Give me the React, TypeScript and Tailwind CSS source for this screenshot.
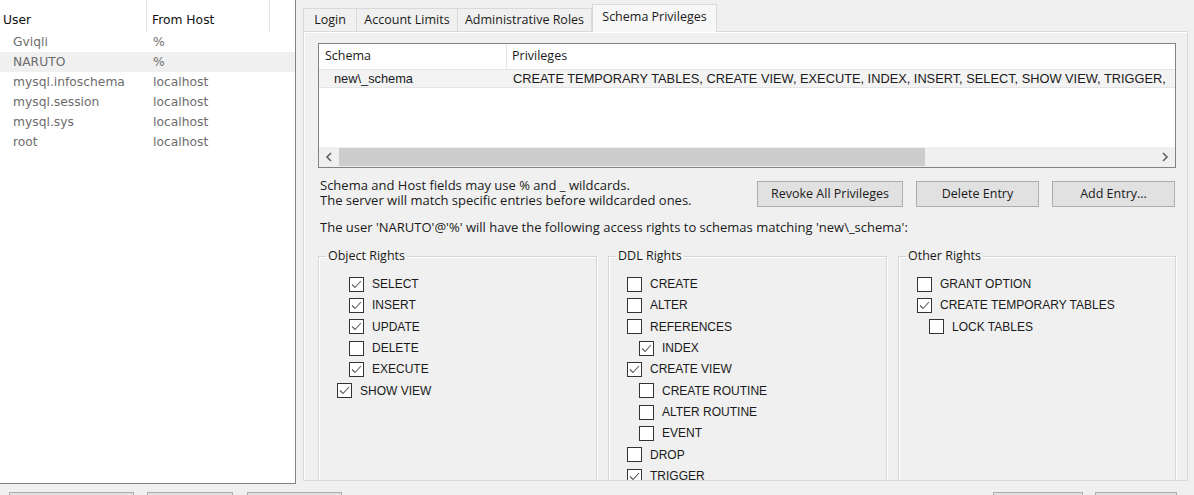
import React from 'react'

const users = [
  { name: 'Gviqli', host: '%' },
  { name: 'NARUTO', host: '%', selected: true },
  { name: 'mysql.infoschema', host: 'localhost' },
  { name: 'mysql.session', host: 'localhost' },
  { name: 'mysql.sys', host: 'localhost' },
  { name: 'root', host: 'localhost' },
]

const tabs = [
  { label: 'Login', w: 'w-[54px]' },
  { label: 'Account Limits', w: 'w-[101px]' },
  { label: 'Administrative Roles', w: 'w-[134px]' },
]

type Right = { label: string; checked: boolean; indent?: number }

const objectRights: Right[] = [
  { label: 'SELECT', checked: true },
  { label: 'INSERT', checked: true },
  { label: 'UPDATE', checked: true },
  { label: 'DELETE', checked: false },
  { label: 'EXECUTE', checked: true },
  { label: 'SHOW VIEW', checked: true, indent: -1 },
]

const ddlRights: Right[] = [
  { label: 'CREATE', checked: false },
  { label: 'ALTER', checked: false },
  { label: 'REFERENCES', checked: false },
  { label: 'INDEX', checked: true, indent: 1 },
  { label: 'CREATE VIEW', checked: true },
  { label: 'CREATE ROUTINE', checked: false, indent: 1 },
  { label: 'ALTER ROUTINE', checked: false, indent: 1 },
  { label: 'EVENT', checked: false, indent: 1 },
  { label: 'DROP', checked: false },
  { label: 'TRIGGER', checked: true },
]

const otherRights: Right[] = [
  { label: 'GRANT OPTION', checked: false },
  { label: 'CREATE TEMPORARY TABLES', checked: true },
  { label: 'LOCK TABLES', checked: false, indent: 1 },
]

function CheckBox({ checked }: { checked: boolean }) {
  return (
    <span className="w-[15px] h-[15px] shrink-0 border border-[#333333] bg-white flex items-center justify-center">
      {checked && (
        <svg width="13" height="13" viewBox="0 0 13 13">
          <polyline points="2,6.5 5,9.5 11,3" fill="none" stroke="#5a5a5a" strokeWidth="1.1" />
        </svg>
      )}
    </span>
  )
}

function RightsGroup({ title, items, pad, w }: { title: string; items: Right[]; pad: string; w: string }) {
  return (
    <fieldset className={`${w} shrink-0 h-[260px] border border-[#d5d5d5] shadow-[inset_1px_1px_0_#ffffff,1px_1px_0_#ffffff]`}>
      <legend className="ml-[7px] px-[2px] text-[12.5px] leading-[16px] text-[#1a1a1a] font-['Open_Sans',sans-serif]">
        {title}
      </legend>
      <div className={`pt-[9.5px] flex flex-col ${pad}`}>
        {items.map((it) => (
          <div
            key={it.label}
            className={`h-[21.33px] flex items-center gap-[8px] ${it.indent === 1 ? 'pl-[12px]' : it.indent === -1 ? '-ml-[12px]' : ''}`}
          >
            <CheckBox checked={it.checked} />
            <span className="text-[12px] leading-[14px] text-[#1a1a1a] font-['Liberation_Sans',Arial,sans-serif]">{it.label}</span>
          </div>
        ))}
      </div>
    </fieldset>
  )
}

function WinButton({ label, w }: { label: string; w: string }) {
  return (
    <button className={`${w} h-[26px] border border-[#adadad] bg-[#e1e1e1] text-[12.5px] text-[#1a1a1a] font-['Open_Sans',sans-serif]`}>
      {label}
    </button>
  )
}

export default function App() {
  return (
    <div className="w-[1194px] h-[495px] overflow-hidden bg-[#f0f0f0] flex flex-col">
      <div className="flex items-start">
        {/* user list */}
        <div className="w-[296px] h-[484px] shrink-0 bg-white border-r border-b border-[#828282] font-['DejaVu_Sans',sans-serif] text-[12.3px]">
          <div className="h-[32px] flex items-end text-[#111]">
            <div className="w-[147px] h-full flex items-end pb-[4px] pl-[3px] border-r border-[#e5e5e5] leading-[16px]">User</div>
            <div className="w-[123px] h-full flex items-end pb-[4px] pl-[5px] border-r border-[#e5e5e5] leading-[16px]">From Host</div>
          </div>
          {users.map((u) => (
            <div key={u.name} className={`h-[20px] flex items-center text-[#6d6d6d] ${u.selected ? 'bg-[#f0f0f0]' : ''}`}>
              <div className="w-[153px] pl-[13px]">{u.name}</div>
              <div>{u.host}</div>
            </div>
          ))}
        </div>

        {/* tab control */}
        <div className="ml-[7px] w-[885px] flex flex-col">
          <div className="h-[31px] flex items-end font-['Open_Sans',sans-serif] text-[12.5px] text-[#1a1a1a]">
            {tabs.map((t, i) => (
              <div
                key={t.label}
                className={`${t.w} h-[23px] flex items-center justify-center bg-[#f0f0f0] border-t border-[#d9d9d9] ${i === 0 ? 'border-l' : ''} border-r`}
              >
                {t.label}
              </div>
            ))}
            <div className="w-[125px] h-[28px] -mb-[1px] relative z-10 flex items-start pt-[3px] justify-center bg-[#f7f7f7] border-t border-l border-r border-[#d9d9d9]">
              Schema Privileges
            </div>
          </div>
          <div className="h-[450px] border border-[#d9d9d9] bg-[#f0f0f0] overflow-hidden pl-[14px] pr-[11px] pt-[11px] shadow-[inset_1px_1px_0_#ffffff]">
            {/* schema table */}
            <div className="h-[125px] border border-[#828282] bg-white flex flex-col">
              <div className="h-[25px] shrink-0 flex font-['Open_Sans',sans-serif] text-[12.5px] text-[#1a1a1a]">
                <div className="w-[188px] pl-[6px] flex items-center border-r border-[#e5e5e5]">Schema</div>
                <div className="pl-[5px] flex items-center">Privileges</div>
              </div>
              <div className="h-[19px] shrink-0 flex items-center bg-[#f3f3f3] border-y border-[#e5e5e5] whitespace-nowrap overflow-hidden font-['Liberation_Sans',Arial,sans-serif] text-[12.8px] text-[#1a1a1a]">
                <div className="w-[194px] shrink-0 pl-[15px]">new\_schema</div>
                <div>CREATE TEMPORARY TABLES, CREATE VIEW, EXECUTE, INDEX, INSERT, SELECT, SHOW VIEW, TRIGGER,</div>
              </div>
              <div className="flex-1" />
              <div className="h-[20px] shrink-0 flex items-center bg-[#f0f0f0]">
                <div className="w-[20px] flex justify-center">
                  <svg width="8" height="10" viewBox="0 0 8 10">
                    <polyline points="6,1 2,5 6,9" fill="none" stroke="#606060" strokeWidth="1.6" />
                  </svg>
                </div>
                <div className="w-[586px] h-[18px] bg-[#cdcdcd]" />
                <div className="flex-1" />
                <div className="w-[20px] flex justify-center">
                  <svg width="8" height="10" viewBox="0 0 8 10">
                    <polyline points="2,1 6,5 2,9" fill="none" stroke="#606060" strokeWidth="1.6" />
                  </svg>
                </div>
              </div>
            </div>

            {/* info + buttons */}
            <div className="mt-[10px] flex items-start justify-between font-['Open_Sans',sans-serif] text-[13px] text-[#1a1a1a]">
              <div className="pl-[2px] leading-[15px]">
                <div>Schema and Host fields may use % and _ wildcards.</div>
                <div>The server will match specific entries before wildcarded ones.</div>
              </div>
              <div className="mt-[3px] mr-[1px] flex gap-[13px]">
                <WinButton label="Revoke All Privileges" w="w-[146px]" />
                <WinButton label="Delete Entry" w="w-[123px]" />
                <WinButton label="Add Entry..." w="w-[123px]" />
              </div>
            </div>
            <div className="mt-[12px] pl-[2px] leading-[15px] font-['Open_Sans',sans-serif] text-[13px] text-[#1a1a1a]">
              The user 'NARUTO'@'%' will have the following access rights to schemas matching 'new\_schema':
            </div>

            {/* rights */}
            <div className="mt-[13px] flex gap-[11px]">
              <RightsGroup title="Object Rights" items={objectRights} pad="pl-[30px]" w="w-[279px]" />
              <RightsGroup title="DDL Rights" items={ddlRights} pad="pl-[18px]" w="w-[279px]" />
              <RightsGroup title="Other Rights" items={otherRights} pad="pl-[18px]" w="w-[278px]" />
            </div>
          </div>
        </div>
      </div>

      {/* bottom buttons */}
      <div className="mt-[8px] flex">
        <div className="ml-[9px] w-[125px] h-[24px] border border-[#adadad] bg-[#e1e1e1]" />
        <div className="ml-[13px] w-[86px] h-[24px] border border-[#adadad] bg-[#e1e1e1]" />
        <div className="ml-[14px] w-[95px] h-[24px] border border-[#adadad] bg-[#e1e1e1]" />
        <div className="flex-1" />
        <div className="w-[90px] h-[24px] border border-[#adadad] bg-[#e1e1e1]" />
        <div className="ml-[12px] mr-[17px] w-[82px] h-[24px] border border-[#adadad] bg-[#e1e1e1]" />
      </div>
    </div>
  )
}
